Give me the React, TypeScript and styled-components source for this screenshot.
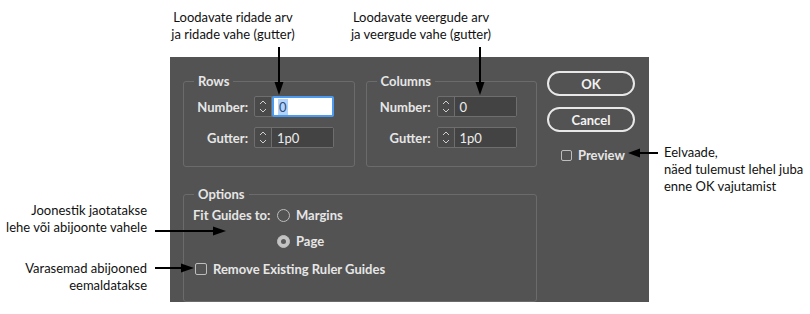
import React from 'react';
import styled, { createGlobalStyle } from 'styled-components';

const GlobalStyle = createGlobalStyle`
  html, body {
    margin:0;
    padding:0;
    background:#fff;
  }
  body {
    font-family: Lato, "Liberation Sans", sans-serif;
  }
`;

const Page = styled.div`
  position:relative;
  width:810px;
  height:314px;
  box-sizing:border-box;
  padding:57px 0 0 170px;
  overflow:hidden;
`;

const Dialog = styled.div`
  width:479px;
  height:245px;
  box-sizing:border-box;
  background:#535353;
  padding:14px 14px 0 13px;
  display:flex;
  gap:10px;
  font-family: Lato, "Liberation Sans", sans-serif;
  font-weight:700;
  font-size:13px;
  color:#e6e6e6;
`;

const Groups = styled.div`
  width:354px;
  margin-top:3px;
  display:flex;
  flex-direction:column;
  gap:20px;
`;

const GroupRow = styled.div`
  display:flex;
  gap:11px;
`;

const Group = styled.fieldset`
  flex:1;
  min-width:0;
  margin:0;
  padding:0;
  border:1px solid #6b6b6b;
  border-radius:3px;
`;

const Legend = styled.legend`
  margin-left:10px;
  padding:0 4px;
  line-height:14px;
  font-size:13px;
`;

const GroupBody = styled.div<{ $pad: string }>`
  padding:${p => p.$pad};
`;

const FieldGrid = styled.div`
  display:grid;
  grid-template-columns:53px 80px;
  column-gap:6px;
  row-gap:10px;
  align-items:center;
`;

const Label = styled.label<{ $align?: string }>`
  text-align:${p => p.$align ?? 'right'};
  white-space:nowrap;
`;

const Spinner = styled.div`
  display:flex;
  height:21px;
  box-sizing:border-box;
  border:1px solid #6e6e6e;
  border-radius:2px;
  background:#4a4a4a;
`;

const Stepper = styled.div`
  width:16px;
  flex:none;
  display:flex;
  align-items:center;
  justify-content:center;
  border-right:1px solid #6e6e6e;
`;

const Field = styled.div<{ $focused?: boolean }>`
  flex:1;
  display:flex;
  align-items:center;
  box-sizing:border-box;
  padding-left:5px;
  font-weight:400;
  font-size:13px;
  background:${p => (p.$focused ? '#ffffff' : '#434343')};
  color:${p => (p.$focused ? '#2a4d7a' : '#ececec')};
  ${p =>
    p.$focused &&
    `
    margin:-1px -1px -1px 0;
    border:2px solid #4d9bf0;
    border-radius:2px;
    padding-left:4px;
  `}
`;

const Selected = styled.span`
  background:#b3d3fa;
  padding:0 1px;
`;

const OptionsBody = styled.div`
  display:flex;
  flex-direction:column;
  gap:10px;
`;

const FitGrid = styled.div`
  display:grid;
  grid-template-columns:78px auto;
  column-gap:6px;
  row-gap:8px;
  align-items:center;
`;

const Choice = styled.div<{ $indent?: number }>`
  display:flex;
  align-items:center;
  height:18px;
  gap:6px;
  margin-left:${p => p.$indent ?? 0}px;
  white-space:nowrap;
`;

const Radio = styled.span<{ $checked?: boolean }>`
  position:relative;
  width:13px;
  height:13px;
  box-sizing:border-box;
  border-radius:50%;
  border:1px solid #bdbdbd;
  background:${p => (p.$checked ? '#c4c4c4' : 'transparent')};
  flex:none;
  &::after {
    content:'';
    display:${p => (p.$checked ? 'block' : 'none')};
    position:absolute;
    left:3px;
    top:3px;
    width:5px;
    height:5px;
    border-radius:50%;
    background:#5a5a5a;
  }
`;

const Check = styled.span<{ $size: number }>`
  width:${p => p.$size}px;
  height:${p => p.$size}px;
  box-sizing:border-box;
  border:1px solid #bdbdbd;
  border-radius:2px;
  flex:none;
`;

const Side = styled.div`
  width:88px;
  display:flex;
  flex-direction:column;
  gap:11px;
`;

const Button = styled.button`
  height:25px;
  box-sizing:border-box;
  border:2px solid #e8e8e8;
  border-radius:13px;
  background:transparent;
  color:#f2f2f2;
  font-family:inherit;
  font-weight:700;
  font-size:13px;
  padding:0;
`;

const PreviewRow = styled.div`
  display:flex;
  align-items:center;
  gap:6px;
  margin-top:4px;
  padding-left:14px;
`;

const Callout = styled.div<{ $top: number; $left: number; $width: number; $align: string }>`
  position:absolute;
  top:${p => p.$top}px;
  left:${p => p.$left}px;
  width:${p => p.$width}px;
  text-align:${p => p.$align};
  font-family: Lato, "Liberation Sans", sans-serif;
  font-size:13px;
  line-height:17px;
  color:#111;
  white-space:nowrap;
`;

const Overlay = styled.svg`
  position:absolute;
  left:0;
  top:0;
  pointer-events:none;
`;

function Chevrons() {
  return (
    <svg width="8" height="17" viewBox="0 0 8 17">
      <path d="M1 6 L4 3 L7 6" fill="none" stroke="#cfcfcf" strokeWidth="1" />
      <path d="M1 11 L4 14 L7 11" fill="none" stroke="#cfcfcf" strokeWidth="1" />
    </svg>
  );
}

function NumberSpinner({ value, focused }: { value: string; focused?: boolean }) {
  return (
    <Spinner>
      <Stepper><Chevrons /></Stepper>
      <Field $focused={focused}>{focused ? <Selected>{value}</Selected> : value}</Field>
    </Spinner>
  );
}

function GuideGroup({ title }: { title: string }) {
  return (
    <Group>
      <Legend>{title}</Legend>
      <GroupBody $pad="8px 19px 18px 11px">
        <FieldGrid>
          <Label>Number:</Label>
          <NumberSpinner value="0" focused={title === 'Rows'} />
          <Label>Gutter:</Label>
          <NumberSpinner value="1p0" />
        </FieldGrid>
      </GroupBody>
    </Group>
  );
}

export default function App() {
  return (
    <>
      <GlobalStyle />
      <Page>
        <Dialog>
          <Groups>
            <GroupRow>
              <GuideGroup title="Rows" />
              <GuideGroup title="Columns" />
            </GroupRow>
            <Group>
              <Legend>Options</Legend>
              <GroupBody $pad="5px 10px 10px 9px">
                <OptionsBody>
                  <FitGrid>
                    <Label as="span" $align="left">Fit Guides to:</Label>
                    <Choice><Radio />Margins</Choice>
                    <span />
                    <Choice><Radio $checked />Page</Choice>
                  </FitGrid>
                  <Choice $indent={2}>
                    <Check $size={12} />
                    Remove Existing Ruler Guides
                  </Choice>
                </OptionsBody>
              </GroupBody>
            </Group>
          </Groups>
          <Side>
            <Button>OK</Button>
            <Button>Cancel</Button>
            <PreviewRow>
              <Check $size={11} />
              Preview
            </PreviewRow>
          </Side>
        </Dialog>

        <Callout $top={9} $left={143} $width={180} $align="center">
          Loodavate ridade arv<br />ja ridade vahe (gutter)
        </Callout>
        <Callout $top={9} $left={331} $width={180} $align="center">
          Loodavate veergude arv<br />ja veergude vahe (gutter)
        </Callout>
        <Callout $top={144} $left={664} $width={146} $align="left">
          Eelvaade,<br />näed tulemust lehel juba<br />enne OK vajutamist
        </Callout>
        <Callout $top={202} $left={0} $width={147} $align="right">
          Joonestik jaotatakse<br />lehe või abijoonte vahele
        </Callout>
        <Callout $top={260} $left={0} $width={147} $align="right">
          Varasemad abijooned<br />eemaldatakse
        </Callout>

        <Overlay width="810" height="314" viewBox="0 0 810 314">
          <g stroke="#000" strokeWidth="2" fill="none">
            <line x1="279" y1="47" x2="279" y2="84" />
            <line x1="480" y1="47" x2="480" y2="84" />
            <line x1="658" y1="153" x2="639" y2="153" />
            <line x1="155" y1="231" x2="215" y2="231" />
            <line x1="155" y1="268" x2="183" y2="268" />
          </g>
          <g fill="#000">
            <polygon points="274.5,82 283.5,82 279,95" />
            <polygon points="475.5,82 484.5,82 480,95" />
            <polygon points="640,148.5 640,157.5 628,153" />
            <polygon points="213,226.5 213,235.5 226,231" />
            <polygon points="181,263.5 181,272.5 194,268" />
          </g>
        </Overlay>
      </Page>
    </>
  );
}
